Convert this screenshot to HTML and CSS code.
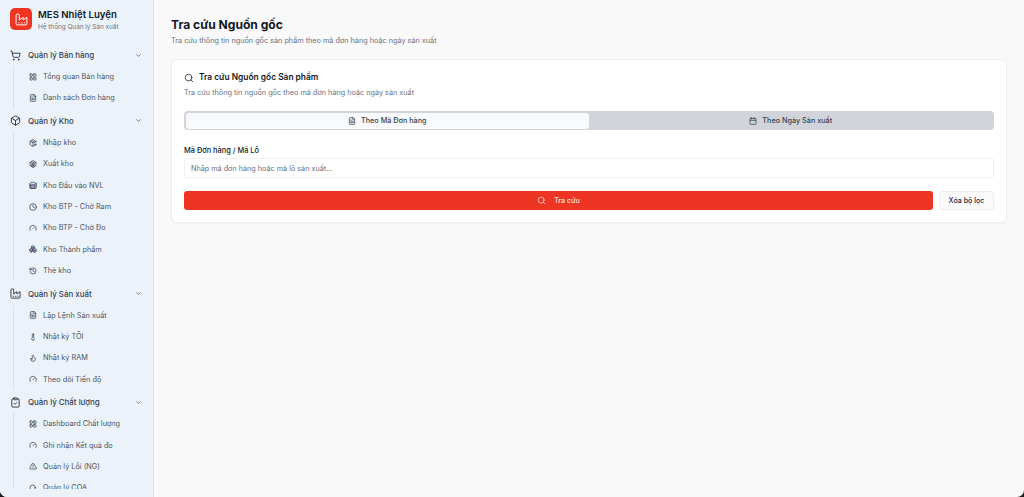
FILE: index.html
```html
<!DOCTYPE html>
<html lang="vi">
<head>
<meta charset="utf-8">
<title>Tra cứu Nguồn gốc</title>
<link rel="stylesheet" href="styles.css">
</head>
<body>
<svg class="defs" width="0" height="0" aria-hidden="true">
  <defs>
    <symbol id="i-factory" viewBox="0 0 24 24"><path d="M2 20a2 2 0 0 0 2 2h16a2 2 0 0 0 2-2V8l-7 5V8l-7 5V4a2 2 0 0 0-2-2H4a2 2 0 0 0-2 2Z"/><path d="M17 18h1M12 18h1M7 18h1"/></symbol>
    <symbol id="i-cart" viewBox="0 0 24 24"><circle cx="8" cy="21" r="1"/><circle cx="19" cy="21" r="1"/><path d="M2.05 2.05h2l2.66 12.42a2 2 0 0 0 2 1.58h9.78a2 2 0 0 0 1.95-1.57l1.65-7.43H5.12"/></symbol>
    <symbol id="i-chev" viewBox="0 0 24 24"><path d="m6 9 6 6 6-6"/></symbol>
    <symbol id="i-grid" viewBox="0 0 24 24"><rect x="3" y="3" width="7" height="7" rx="1"/><rect x="14" y="3" width="7" height="7" rx="1"/><rect x="14" y="14" width="7" height="7" rx="1"/><rect x="3" y="14" width="7" height="7" rx="1"/></symbol>
    <symbol id="i-file" viewBox="0 0 24 24"><path d="M15 2H6a2 2 0 0 0-2 2v16a2 2 0 0 0 2 2h12a2 2 0 0 0 2-2V7Z"/><path d="M14 2v4a2 2 0 0 0 2 2h4M16 13H8M16 17H8M10 9H8"/></symbol>
    <symbol id="i-box" viewBox="0 0 24 24"><path d="M21 8a2 2 0 0 0-1-1.73l-7-4a2 2 0 0 0-2 0l-7 4A2 2 0 0 0 3 8v8a2 2 0 0 0 1 1.73l7 4a2 2 0 0 0 2 0l7-4A2 2 0 0 0 21 16Z"/><path d="m3.3 7 8.7 5 8.7-5M12 22V12"/></symbol>
    <symbol id="i-pkg-in" viewBox="0 0 24 24"><path d="M21 10V8a2 2 0 0 0-1-1.73l-7-4a2 2 0 0 0-2 0l-7 4A2 2 0 0 0 3 8v8a2 2 0 0 0 1 1.73l7 4a2 2 0 0 0 2 0l2-1.14"/><path d="m7.5 4.27 9 5.15M3.3 7 12 12l8.7-5M12 22V12M16 17h6M19 14v6"/></symbol>
    <symbol id="i-pkg-out" viewBox="0 0 24 24"><path d="M21 8a2 2 0 0 0-1-1.73l-7-4a2 2 0 0 0-2 0l-7 4A2 2 0 0 0 3 8v8a2 2 0 0 0 1 1.73l7 4a2 2 0 0 0 2 0l7-4A2 2 0 0 0 21 16Z"/><path d="M3.3 7 12 12l8.7-5M12 22V12M7.5 4.3l9 5.2"/><path d="M8 14h8v4H8z"/></symbol>
    <symbol id="i-ware" viewBox="0 0 24 24"><path d="M22 8.35V20a2 2 0 0 1-2 2H4a2 2 0 0 1-2-2V8.35A2 2 0 0 1 3.26 6.5l8-3.2a2 2 0 0 1 1.48 0l8 3.2A2 2 0 0 1 22 8.35Z"/><path d="M6 18h12M6 14h12"/><rect x="6" y="10" width="12" height="12"/></symbol>
    <symbol id="i-clock" viewBox="0 0 24 24"><circle cx="12" cy="12" r="10"/><path d="M12 6v6l4 2"/></symbol>
    <symbol id="i-gauge" viewBox="0 0 24 24"><path d="m12 14 4-4"/><path d="M3.34 19a10 10 0 1 1 17.32 0"/></symbol>
    <symbol id="i-boxes" viewBox="0 0 24 24"><path d="M2.97 12.92A2 2 0 0 0 2 14.63v3.24a2 2 0 0 0 .97 1.71l3 1.8a2 2 0 0 0 2.06 0L12 19v-5.5l-5-3-4.03 2.42Z"/><path d="m7 16.5-4.74-2.85M7 16.5l5-3M7 16.5v5.17"/><path d="M12 13.5V19l3.97 2.38a2 2 0 0 0 2.06 0l3-1.8a2 2 0 0 0 .97-1.71v-3.24a2 2 0 0 0-.97-1.71L17 10.5l-5 3Z"/><path d="m17 16.5-5-3M17 16.5l4.74-2.85M17 16.5v5.17"/><path d="M7.97 4.42A2 2 0 0 0 7 6.13v4.37l5 3 5-3V6.13a2 2 0 0 0-.97-1.71l-3-1.8a2 2 0 0 0-2.06 0l-3 1.8Z"/><path d="M12 8 7.26 5.15M12 8l4.74-2.85M12 13.5V8"/></symbol>
    <symbol id="i-history" viewBox="0 0 24 24"><path d="M3 12a9 9 0 1 0 9-9 9.75 9.75 0 0 0-6.74 2.74L3 8"/><path d="M3 3v5h5M12 7v5l4 2"/></symbol>
    <symbol id="i-thermo" viewBox="0 0 24 24"><path d="M14 4v10.54a4 4 0 1 1-4 0V4a2 2 0 0 1 4 0Z"/></symbol>
    <symbol id="i-flame" viewBox="0 0 24 24"><path d="M8.5 14.5A2.5 2.5 0 0 0 11 12c0-1.38-.5-2-1-3-1.07-2.14-.22-4.05 2-6 .5 2.5 2 4.9 4 6.5 2 1.6 3 3.5 3 5.5a7 7 0 1 1-14 0c0-1.15.43-2.29 1-3a2.5 2.5 0 0 0 2.5 2.5z"/></symbol>
    <symbol id="i-check" viewBox="0 0 24 24"><rect x="8" y="2" width="8" height="4" rx="1"/><path d="M16 4h2a2 2 0 0 1 2 2v14a2 2 0 0 1-2 2H6a2 2 0 0 1-2-2V6a2 2 0 0 1 2-2h2"/><path d="m9 14 2 2 4-4"/></symbol>
    <symbol id="i-warn" viewBox="0 0 24 24"><path d="m21.73 18-8-14a2 2 0 0 0-3.48 0l-8 14A2 2 0 0 0 4 21h16a2 2 0 0 0 1.73-3"/><path d="M12 9v4M12 17h.01"/></symbol>
    <symbol id="i-search" viewBox="0 0 24 24"><circle cx="11" cy="11" r="8"/><path d="m21 21-4.3-4.3"/></symbol>
    <symbol id="i-cal" viewBox="0 0 24 24"><path d="M8 2v4M16 2v4"/><rect x="3" y="4" width="18" height="18" rx="2"/><path d="M3 10h18"/></symbol>
  </defs>
</svg>
<div class="app">
  <aside class="sidebar">
    <header class="brand">
      <span class="logo"><svg class="ico logo-ico"><use href="#i-factory"/></svg></span>
      <div class="brand-text">
        <div class="brand-title">MES Nhiệt Luyện</div>
        <div class="brand-sub">Hệ thống Quản lý Sản xuất</div>
      </div>
    </header>
    <nav class="nav">
      <div class="group"><svg class="ico group-ico"><use href="#i-cart"/></svg><span class="group-label">Quản lý Bán hàng</span><svg class="ico chev"><use href="#i-chev"/></svg></div>
      <ul class="subs">
        <li class="sub"><svg class="ico"><use href="#i-grid"/></svg>Tổng quan Bán hàng</li>
        <li class="sub"><svg class="ico"><use href="#i-file"/></svg>Danh sách Đơn hàng</li>
      </ul>
      <div class="group"><svg class="ico group-ico"><use href="#i-box"/></svg><span class="group-label">Quản lý Kho</span><svg class="ico chev"><use href="#i-chev"/></svg></div>
      <ul class="subs">
        <li class="sub"><svg class="ico"><use href="#i-pkg-in"/></svg>Nhập kho</li>
        <li class="sub"><svg class="ico"><use href="#i-pkg-out"/></svg>Xuất kho</li>
        <li class="sub"><svg class="ico"><use href="#i-ware"/></svg>Kho Đầu vào NVL</li>
        <li class="sub"><svg class="ico"><use href="#i-clock"/></svg>Kho BTP - Chờ Ram</li>
        <li class="sub"><svg class="ico"><use href="#i-gauge"/></svg>Kho BTP - Chờ Đo</li>
        <li class="sub"><svg class="ico"><use href="#i-boxes"/></svg>Kho Thành phẩm</li>
        <li class="sub"><svg class="ico"><use href="#i-history"/></svg>Thẻ kho</li>
      </ul>
      <div class="group"><svg class="ico group-ico"><use href="#i-factory"/></svg><span class="group-label">Quản lý Sản xuất</span><svg class="ico chev"><use href="#i-chev"/></svg></div>
      <ul class="subs">
        <li class="sub"><svg class="ico"><use href="#i-file"/></svg>Lập Lệnh Sản xuất</li>
        <li class="sub"><svg class="ico"><use href="#i-thermo"/></svg>Nhật ký TÔI</li>
        <li class="sub"><svg class="ico"><use href="#i-flame"/></svg>Nhật ký RAM</li>
        <li class="sub"><svg class="ico"><use href="#i-gauge"/></svg>Theo dõi Tiến độ</li>
      </ul>
      <div class="group"><svg class="ico group-ico"><use href="#i-check"/></svg><span class="group-label">Quản lý Chất lượng</span><svg class="ico chev"><use href="#i-chev"/></svg></div>
      <ul class="subs">
        <li class="sub"><svg class="ico"><use href="#i-grid"/></svg>Dashboard Chất lượng</li>
        <li class="sub"><svg class="ico"><use href="#i-gauge"/></svg>Ghi nhận Kết quả đo</li>
        <li class="sub"><svg class="ico"><use href="#i-warn"/></svg>Quản lý Lỗi (NG)</li>
        <li class="sub"><svg class="ico"><use href="#i-search"/></svg>Quản lý COA</li>
      </ul>
    </nav>
  </aside>
  <main class="main">
    <h1 class="page-title">Tra cứu Nguồn gốc</h1>
    <p class="page-sub">Tra cứu thông tin nguồn gốc sản phẩm theo mã đơn hàng hoặc ngày sản xuất</p>
    <section class="card">
      <h2 class="card-title"><svg class="ico card-ico"><use href="#i-search"/></svg>Tra cứu Nguồn gốc Sản phẩm</h2>
      <p class="card-desc">Tra cứu thông tin nguồn gốc theo mã đơn hàng hoặc ngày sản xuất</p>
      <div class="tabs">
        <div class="tab active"><svg class="ico"><use href="#i-file"/></svg>Theo Mã Đơn hàng</div>
        <div class="tab"><svg class="ico"><use href="#i-cal"/></svg>Theo Ngày Sản xuất</div>
      </div>
      <label class="field-label" for="code">Mã Đơn hàng / Mã Lô</label>
      <input class="input" id="code" type="text" placeholder="Nhập mã đơn hàng hoặc mã lô sản xuất...">
      <div class="actions">
        <button class="btn primary" type="button"><svg class="ico"><use href="#i-search"/></svg>Tra cứu</button>
        <button class="btn outline" type="button">Xóa bộ lọc</button>
      </div>
    </section>
  </main>
</div>
</body>
</html>
```

FILE: styles.css
```css
* { box-sizing: border-box; }
html, body { margin: 0; height: 100%; overflow: hidden; }
body { font-family: Inter, "Liberation Sans", sans-serif; color: #111827; background: #1a1a1a; }
.defs { position: absolute; }
.app { display: flex; height: 497px; overflow: hidden; background: #f9f9f9; border-radius: 0 0 7px 7px; }
.ico { width: 8px; height: 8px; fill: none; stroke: currentColor; stroke-width: 2.2; stroke-linecap: round; stroke-linejoin: round; flex: none; }

.sidebar { width: 154px; flex: none; height: 497px; overflow: hidden; background: #ebf2fa; border-right: 1px solid #dde3ea; }
.brand { height: 44px; display: flex; align-items: flex-start; gap: 6px; padding: 8px 10px 0; }
.logo { width: 22px; height: 22px; border-radius: 5px; background: #ee3524; display: flex; align-items: center; justify-content: center; color: #fff; flex: none; }
.logo-ico { width: 13px; height: 13px; stroke-width: 1.8; }
.brand-title { font-size: 9.6px; font-weight: 600; line-height: 13px; color: #111827; }
.brand-sub { font-size: 6.4px; line-height: 9px; color: #6b7280; margin-top: 2px; }

.nav { height: 445px; overflow: hidden; padding: 0 10px; }
.group { height: 22px; display: flex; align-items: center; color: #364152; font-size: 7.9px; font-weight: 500; }
.group-ico { width: 11px; height: 11px; margin-right: 7px; stroke-width: 1.9; color: #1f2937; }
.group-label { flex: 1; }
.chev { width: 7px; height: 7px; margin-right: 1px; color: #374151; }
.subs { list-style: none; margin: 0 0 1.3px 2.5px; padding: 0 0 0 15.5px; border-left: 1px solid #d9e2ec; }
.sub { height: 21.33px; display: flex; align-items: center; gap: 6px; font-size: 7.3px; color: #4b5563; }
.sub .ico { color: #374151; }

.main { flex: 1; min-width: 0; padding: 14.5px 17px 0; }
.page-title { margin: 0; font-size: 12.1px; font-weight: 700; line-height: 19px; color: #111827; }
.page-sub { margin: 1.5px 0 0; font-size: 7.28px; line-height: 11px; color: #6b7280; }
.card { margin-top: 13px; height: 164px; padding: 12px 12px; background: #fff; border: 1px solid #eceef1; border-radius: 6px; box-shadow: 0 1px 2px rgba(0,0,0,.04); }
.card-title { margin: 0; display: flex; align-items: center; gap: 5px; font-size: 8.4px; font-weight: 600; line-height: 11px; color: #111827; }
.card-ico { width: 10px; height: 10px; stroke-width: 1.8; }
.card-desc { margin: 4.5px 0 0; font-size: 7.28px; line-height: 10px; color: #6b7280; }
.tabs { margin-top: 13.5px; height: 19px; display: grid; grid-template-columns: 1fr 1fr; padding: 1.5px; background: #d1d5db; border-radius: 4px; }
.tab { display: flex; align-items: center; justify-content: center; gap: 5px; font-size: 7.25px; font-weight: 500; color: #374151; border-radius: 3px; }
.tab.active { background: #f9fafb; }
.field-label { display: block; margin-top: 14.5px; font-size: 7.4px; font-weight: 500; line-height: 11px; color: #111827; }
.input { display: block; width: 100%; height: 20px; margin-top: 2.5px; padding: 0 6px; border: 1px solid #f0f1f3; border-radius: 3px; background: #fff; font: 7.24px Inter, "Liberation Sans", sans-serif; color: #111827; outline: none; }
.input::placeholder { color: #6b7280; opacity: 1; }
.actions { display: flex; gap: 6px; margin-top: 12.5px; }
.btn { height: 19.5px; display: flex; align-items: center; justify-content: center; gap: 8px; border-radius: 3px; font: 500 7.1px Inter, "Liberation Sans", sans-serif; padding: 0; }
.btn .ico { width: 9px; height: 9px; stroke-width: 1.9; }
.btn.primary { flex: 1; background: #ee3524; border: 0; color: #fde5e0; }
.btn.outline { width: 55px; background: #fafafa; border: 1px solid #eceef1; color: #1f2937; }
```
